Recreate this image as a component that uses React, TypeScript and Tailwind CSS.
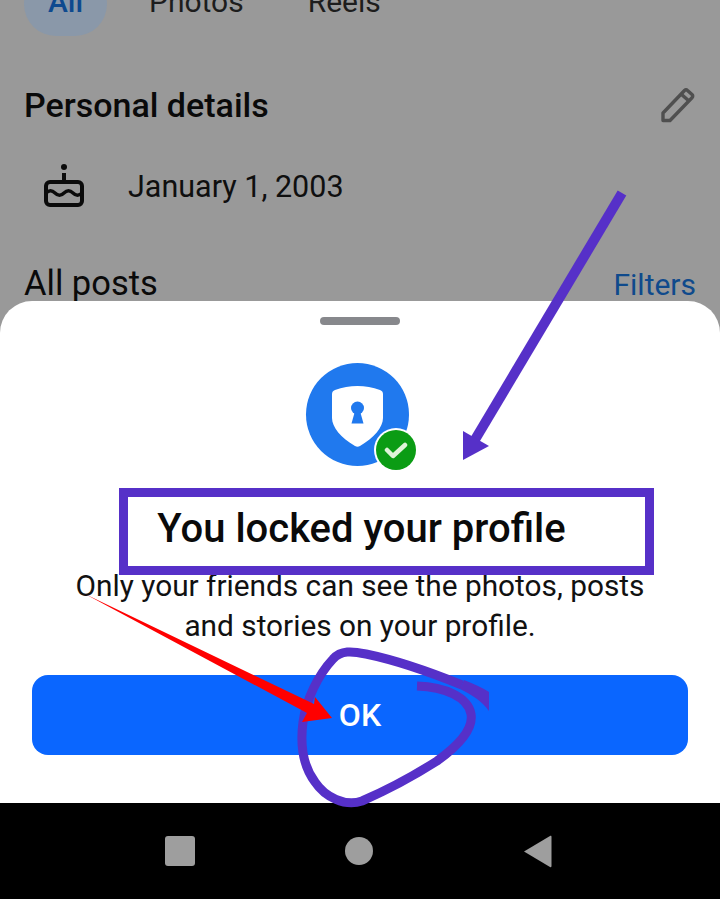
const roboto = "font-['Roboto',sans-serif]";

function CakeIcon() {
  return (
    <svg width="42" height="44" viewBox="0 0 42 44" fill="none" stroke="#0b0b0b" strokeWidth="4">
      <circle cx="21" cy="4" r="3" fill="#0b0b0b" stroke="none" />
      <path d="M21 10v9" />
      <rect x="3" y="19" width="36" height="23" rx="4" />
      <path d="M3 30c3-3 6-3 9 0s6 3 9 0 6-3 9 0 6 3 9 0" strokeWidth="3.400" />
    </svg>
  );
}

function PencilIcon() {
  return (
    <svg width="36" height="36" viewBox="0 0 36 36" fill="none" stroke="#4f4f4f" strokeWidth="3.400" strokeLinejoin="round">
      <path d="M3 26 24.500 3.500c1-1 2-1 3 0l4.500 4c1 1 1 2.200 0 3.200L10 33.500H3z" />
      <path d="m21 7 8 7" />
    </svg>
  );
}

function ShieldBadge() {
  return (
    <div className="relative w-[103px] h-[103px] rounded-full bg-[#2079ee] flex items-center justify-center">
      <svg className="mt-[4px]" width="51" height="61" viewBox="0 0 51 61">
        <path d="M0 8q0-3 3-4Q14 0 25.500 0T48 4q3 1 3 4v24c0 9-9 20-23 28a5 5 0 0 1-5 0C9 52 0 41 0 32z" fill="#fff" />
        <circle cx="25.500" cy="22" r="6.500" fill="#2079ee" />
        <path d="M23 25h5l3.500 12.500h-12z" fill="#2079ee" />
      </svg>
      <div className="absolute left-[68px] top-[65px] w-11 h-11 rounded-full bg-white flex items-center justify-center">
        <div className="w-10 h-10 rounded-full bg-[#0b9c14] flex items-center justify-center">
          <svg width="24" height="18" viewBox="0 0 24 18" fill="none" stroke="#dff3d8" strokeWidth="4.500" strokeLinecap="round" strokeLinejoin="round">
            <path d="m3 9 6 6L21 4" />
          </svg>
        </div>
      </div>
    </div>
  );
}

export default function App() {
  return (
    <div className={`${roboto} relative w-[720px] h-[899px] overflow-hidden bg-[#999999] flex flex-col`}>
      {/* dimmed profile behind the sheet */}
      <div className="h-[301px] shrink-0 px-6 flex flex-col">
        <div className="flex items-center gap-[42px] -mt-[28px] h-[64px] text-[#1d1d1d] text-[30px]">
          <div className="w-[83px] h-[64px] pb-[6px] rounded-[32px] bg-[#8a98a9] flex items-center justify-center text-[#0e4a8f] font-medium">All</div>
          <span className="pb-[6px]">Photos</span>
          <span className="pb-[6px] ml-[22px]">Reels</span>
        </div>
        <div className="flex items-center justify-between mt-[51px] h-[36px]">
          <h2 className="text-[34px] font-medium text-[#0a0a0a]">Personal details</h2>
          <PencilIcon />
        </div>
        <div className="flex items-center mt-[41px] h-[46px] pl-[19px] gap-[43px]">
          <div className="mb-[5px]">
            <CakeIcon />
          </div>
          <span className="text-[30.500px] text-[#0f0f0f]">January 1, 2003</span>
        </div>
        <div className="flex items-center justify-between mt-[56px] h-[36px]">
          <span className="text-[34.500px] text-[#0a0a0a]">All posts</span>
          <span className="text-[30px] text-[#0f4a8c]">Filters</span>
        </div>
      </div>

      {/* bottom sheet */}
      <div className="h-[502px] shrink-0 bg-white rounded-t-[32px] flex flex-col items-center">
        <div className="w-20 h-2 mt-4 rounded-full bg-[#87888c]" />
        <div className="mt-[38px] mr-[6px]">
          <ShieldBadge />
        </div>
        <h1 className="mt-[40px] ml-[3px] h-[46px] leading-[46px] text-[40px] font-medium text-[#0a0a0a]">You locked your profile</h1>
        <p className="mt-[14px] text-[29.800px] leading-[40px] text-center text-[#111]">
          Only your friends can see the photos, posts
          <br />
          and stories on your profile.
        </p>
        <div className="mt-[29px] w-[656px] h-20 rounded-2xl bg-[#0a66ff] flex items-center justify-center text-white text-[32px] font-medium">OK</div>
      </div>

      {/* system nav bar */}
      <div className="flex-1 bg-black flex items-center pl-[165px] gap-[150px]">
        <div className="w-[30px] h-[30px] rounded-[3px] bg-[#9e9e9e]" />
        <div className="w-7 h-7 rounded-full bg-[#9e9e9e]" />
        <svg width="29" height="33" viewBox="0 0 29 33">
          <path d="M27 1 1 16.500 27 32c1 .5 1.500 0 1.500-1V2c0-1-.5-1.500-1.500-1z" fill="#9e9e9e" />
        </svg>
      </div>

      {/* markup drawn on top of the screenshot */}
      <div className="absolute left-[119px] top-[488px] w-[535px] h-[87px] border-[9px] border-[#5630c8]" />
      <svg className="absolute inset-0 pointer-events-none" width="720" height="899" viewBox="0 0 720 899" fill="none">
        <path d="M622 193 473 443" stroke="#5630c8" strokeWidth="10" />
        <path d="M463 460 463 431 489 446z" fill="#5630c8" />
        <path
          d="M417 686C445 687 468 697 471 714C474 731 455 748 437 761C415 775 385 791 362 801C345 807 325 797 315 782C303 766 300 745 303 722C306 700 318 675 333 659C341 650 352 651 366 654C395 660 430 672 462 685"
          stroke="#5630c8"
          strokeWidth="9"
        />
        <path d="M464 680C474 684 483 688 489 692V711C482 701 472 695 460 689z" fill="#5630c8" />
        <path d="M85 594 314 704 315 697 332 718 302 722 307 713z" fill="#ff0000" />
      </svg>
    </div>
  );
}
